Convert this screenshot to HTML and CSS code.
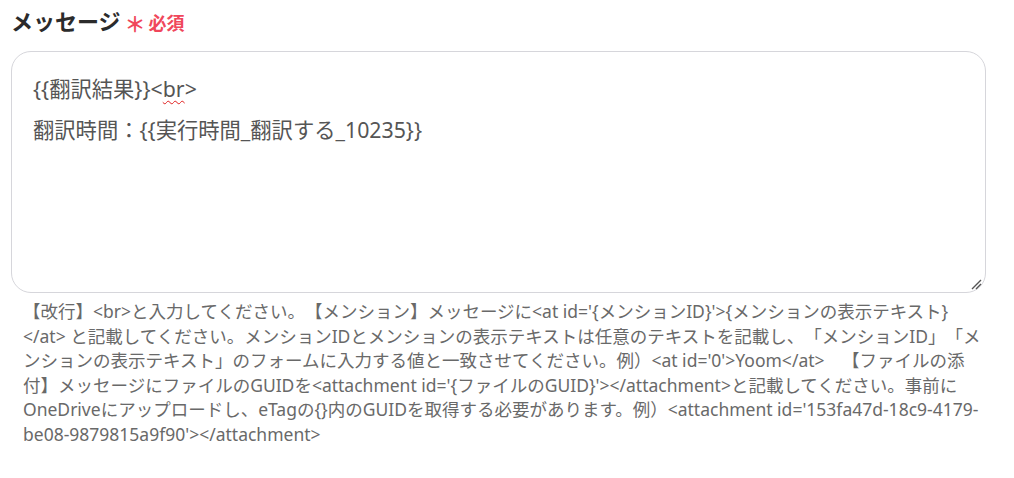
FILE: index.html
```html
<!DOCTYPE html>
<html lang="ja">
<head>
<meta charset="utf-8">
<title>メッセージ</title>
<link rel="stylesheet" href="styles.css">
</head>
<body>
<div class="field">
  <div class="label-row">
    <span class="label">メッセージ</span>
    <span class="required"><span class="star">＊</span>必須</span>
  </div>
  <div class="editor">
    <p class="line">{{翻訳結果}}&lt;<span class="spell">br</span>&gt;</p>
    <p class="line">翻訳時間：{{実行時間_翻訳する_10235}}</p>
    <svg class="grip" width="12" height="12" viewBox="0 0 12 12"><path d="M2 11 L11 2 M6 11 L11 6" stroke="#555" stroke-width="1.4" fill="none"/></svg>
  </div>
  <p class="help">【改行】&lt;br&gt;と入力してください。【メンション】メッセージに&lt;at id='{メンションID}'&gt;{メンションの表示テキスト} &lt;/at&gt; と記載してください。メンションIDとメンションの表示テキストは任意のテキストを記載し、「メンションID」「メンションの表示テキスト」のフォームに入力する値と一致させてください。例）&lt;at id='0'&gt;Yoom&lt;/at&gt;　【ファイルの添付】メッセージにファイルのGUIDを&lt;attachment id='{ファイルのGUID}'&gt;&lt;/attachment&gt;と記載してください。事前にOneDriveにアップロードし、eTagの{}内のGUIDを取得する必要があります。例）&lt;attachment id='153fa47d-18c9-4179-be08-9879815a9f90'&gt;&lt;/attachment&gt;</p>
</div>
</body>
</html>
```
FILE: styles.css
```css
html, body {
  margin: 0;
  padding: 0;
  background: #ffffff;
}
body {
  font-family: "Noto Sans", "Noto Sans CJK JP", sans-serif;
  text-spacing-trim: space-all;
}
.field {
  padding: 4px 28px 0 11px;
  display: flex;
  flex-direction: column;
}
.label-row {
  display: flex;
  align-items: baseline;
  height: 31px;
}
.label {
  font-size: 22px;
  font-weight: 700;
  color: #2b2b2b;
}
.required {
  margin-left: 4px;
  color: #f0475b;
  font-size: 18px;
  font-weight: 700;
}
.star {
  display: inline-block;
  font-size: 21px;
  margin-right: 3px;
  transform: translateY(2px);
}
.editor {
  position: relative;
  margin-top: 16px;
  border: 1px solid #d6d6db;
  border-radius: 20px;
  padding: 16px 22px 0 21px;
  box-sizing: border-box;
  height: 242px;
}
.line {
  margin: 0;
  font-size: 21.3px;
  line-height: 41px;
  color: #555555;
}
.spell {
  text-decoration: underline wavy #e02020;
  text-decoration-thickness: 1px;
  text-underline-offset: 3px;
}
.grip {
  position: absolute;
  right: 3px;
  bottom: 2px;
}
.help {
  margin: 6px 0 0 12px;
  font-size: 17.5px;
  line-height: 24.5px;
  color: #696969;
}
```
